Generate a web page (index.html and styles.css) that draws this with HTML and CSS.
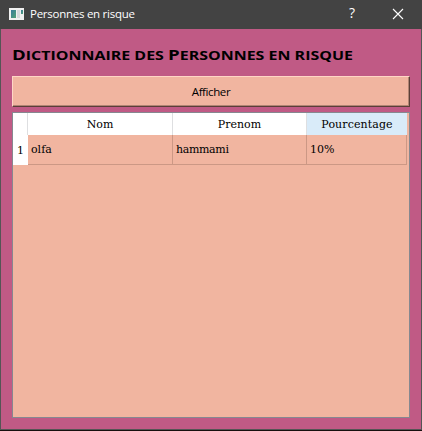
FILE: index.html
```html
<!DOCTYPE html>
<html lang="fr">
<head>
<meta charset="utf-8">
<title>Personnes en risque</title>
<link rel="stylesheet" href="styles.css">
</head>
<body>
<div class="window">
  <header class="titlebar">
    <svg class="app-icon" width="15" height="12" viewBox="0 0 15 12">
      <defs><linearGradient id="screen" x2="1" y2="1"><stop offset="0" stop-color="#397c9c"/><stop offset="1" stop-color="#52a276"/></linearGradient></defs>
      <path fill="#f1f1f1" d="M0 0h15v12H0z"/>
      <path fill="url(#screen)" d="M2 2h5v8H2z"/>
      <path fill="#d5d9dc" d="M8 2h3v8H8z"/>
      <path fill="url(#screen)" d="M12 2h2v4h-2z"/>
    </svg>
    <span class="caption">Personnes en risque</span>
    <span class="help">?</span>
    <svg class="close" width="12" height="12" viewBox="0 0 12 12"><path d="M1 1l10 10M11 1L1 11" stroke="#fff" stroke-width="1.1"/></svg>
  </header>
  <main class="content">
    <h1 class="heading"><span class="heading-text"><b>D</b>ICTIONNAIRE DES <b>P</b>ERSONNES EN RISQUE</span></h1>
    <button class="show">Afficher</button>
    <div class="table-frame">
      <div class="grid">
        <div class="corner"></div>
        <div class="head"><span>Nom</span></div>
        <div class="head"><span>Prenom</span></div>
        <div class="head active"><span class="wide">Pourcentage</span></div>
        <div class="index">1</div>
        <div class="cell"><span>olfa</span></div>
        <div class="cell"><span class="name">hammami</span></div>
        <div class="cell"><span>10%</span></div>
      </div>
    </div>
  </main>
</div>
</body>
</html>
```

FILE: styles.css
```css
* { box-sizing: border-box; }
body { margin: 0; background: #17100f; overflow: hidden; }
.window {
  width: 422px; height: 430px;
  display: flex; flex-direction: column;
  background: #c05a85;
  border: 1px solid #555; border-top: 0;
}
.titlebar {
  flex: 0 0 29px; margin: 0 -1px; padding: 0 18px 2px 9px;
  display: flex; align-items: center;
  background: #434343; color: #fff;
  font: 12px "Open Sans", sans-serif;
}
.caption { margin-left: 6px; font-size: 11.5px; letter-spacing: -0.26px; white-space: nowrap; }
.help { margin-left: auto; font-size: 14px; line-height: 14px; margin-top: -2px; }
.close { margin-left: 37px; }
.content { flex: 1; padding: 17px 11px 11px; display: flex; flex-direction: column; }
.heading {
  margin: 0 0 10px; height: 20px;
  font: 700 12px/20px "Open Sans", sans-serif; color: #000; white-space: nowrap;
}
.heading-text { display: inline-block; transform: scaleX(1.33); transform-origin: 0 50%; }
.heading b { font-size: 14px; line-height: 1; font-weight: 700; }
.show {
  height: 31px; width: 398px; flex: none; padding: 0;
  background: #f1b5a0; color: #000;
  border: 1px solid; border-color: #ffd6c6 #5b3f38 #5b3f38 #ffd6c6;
  box-shadow: inset -1px -1px #b18474;
  font: 11.5px "Open Sans", sans-serif; letter-spacing: -0.4px;
}
.table-frame { flex: 1; margin-top: 5px; width: 398px; border: 1px solid #868890; background: #f1b5a0; }
.grid {
  display: grid; width: 394px;
  grid-template-columns: 15px 145px 134px 100px;
  grid-template-rows: 22px 30px;
  font: 11px "DejaVu Serif", serif; color: #000;
}
.grid > div { display: flex; align-items: center; white-space: nowrap; }
.corner, .head { background: #fff; border-right: 1px solid #dedfe1; }
.head { justify-content: center; }
.head.active { background: #d9ebf9; border-right: 0; }
.index { background: #fff; justify-content: center; }
.cell { padding: 0 0 1px 3px; border-right: 1px solid #cc9885; border-bottom: 1px solid #cc9885; }
.wide { letter-spacing: 0.1px; }
.name { letter-spacing: -0.35px; }
```
